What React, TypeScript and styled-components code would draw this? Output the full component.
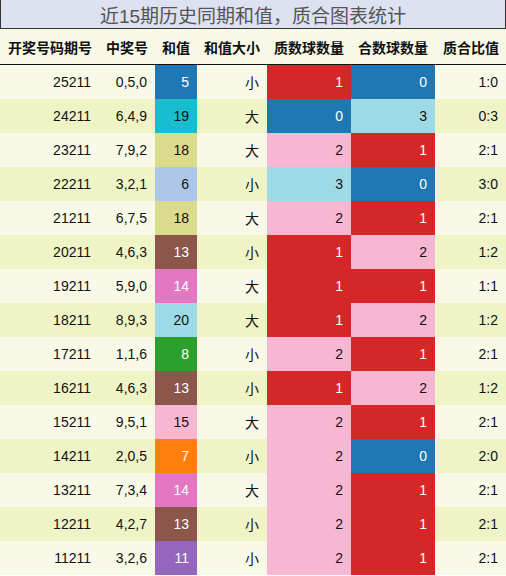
import React from "react";
import styled, { createGlobalStyle } from "styled-components";

const Global = createGlobalStyle`
  html, body { margin: 0; padding: 0; background: #ffffff; }
  body { font-family: "Liberation Sans", "Noto Sans CJK SC", sans-serif; }
`;

const Wrap = styled.div`
  width: 506px;
  display: flex;
  flex-direction: column;
`;

const Title = styled.div`
  height: 28px;
  box-sizing: content-box;
  border: 1px solid #333;
  border-top: none;
  background: #dde1f0;
  color: #555;
  font-family: "Liberation Sans", "Noto Sans CJK SC", sans-serif;
  font-size: 19px;
  display: flex;
  align-items: center;
  justify-content: center;
`;

const Grid = styled.div`
  display: grid;
  grid-template-columns: 99px 56px 42px 70px 84px 84px 71px;
`;

const HeadCell = styled.div`
  height: 35px;
  background: #f8fae7;
  border-bottom: 1px solid #111;
  display: flex;
  align-items: center;
  justify-content: flex-end;
  padding-right: 7px;
  font-family: "Noto Sans CJK SC", sans-serif;
  font-weight: 700;
  font-size: 14px;
  color: #111;
  white-space: nowrap;
`;

const Cell = styled.div<{ $bg: string; $fg: string }>`
  height: 34px;
  background: ${(p) => p.$bg};
  color: ${(p) => p.$fg};
  display: flex;
  align-items: center;
  justify-content: flex-end;
  padding-right: 8px;
  font-family: "Liberation Sans", "Noto Sans CJK SC", sans-serif;
  font-size: 14px;
`;

const palette: Record<number, [string, string]> = {
  5: ["#1f77b4", "#fff"],
  19: ["#17becf", "#111"],
  18: ["#dbdb8d", "#111"],
  6: ["#aec7e8", "#111"],
  13: ["#8c564b", "#fff"],
  14: ["#e377c2", "#fff"],
  20: ["#9edae5", "#111"],
  8: ["#2ca02c", "#fff"],
  15: ["#f7b6d2", "#111"],
  7: ["#ff7f0e", "#fff"],
  11: ["#9467bd", "#fff"],
};

const countColor: Record<number, [string, string]> = {
  0: ["#1f77b4", "#fff"],
  1: ["#d62728", "#fff"],
  2: ["#f7b6d2", "#111"],
  3: ["#9edae5", "#111"],
};

type Row = [string, string, number, string, number, number];

const rows: Row[] = [
  ["25211", "0,5,0", 5, "小", 1, 0],
  ["24211", "6,4,9", 19, "大", 0, 3],
  ["23211", "7,9,2", 18, "大", 2, 1],
  ["22211", "3,2,1", 6, "小", 3, 0],
  ["21211", "6,7,5", 18, "大", 2, 1],
  ["20211", "4,6,3", 13, "小", 1, 2],
  ["19211", "5,9,0", 14, "大", 1, 1],
  ["18211", "8,9,3", 20, "大", 1, 2],
  ["17211", "1,1,6", 8, "小", 2, 1],
  ["16211", "4,6,3", 13, "小", 1, 2],
  ["15211", "9,5,1", 15, "大", 2, 1],
  ["14211", "2,0,5", 7, "小", 2, 0],
  ["13211", "7,3,4", 14, "大", 2, 1],
  ["12211", "4,2,7", 13, "小", 2, 1],
  ["11211", "3,2,6", 11, "小", 2, 1],
];

const headers = ["开奖号码期号", "中奖号", "和值", "和值大小", "质数球数量", "合数球数量", "质合比值"];

export default function App() {
  return (
    <Wrap>
      <Global />
      <Title>近15期历史同期和值，质合图表统计</Title>
      <Grid>
        {headers.map((h) => (
          <HeadCell key={h}>{h}</HeadCell>
        ))}
        {rows.map((r, i) => {
          const bg = i % 2 === 0 ? "#f8fae7" : "#eff4c6";
          const fg = "#111";
          const [sbg, sfg] = palette[r[2]];
          const [zbg, zfg] = countColor[r[4]];
          const [hbg, hfg] = countColor[r[5]];
          return (
            <React.Fragment key={r[0]}>
              <Cell $bg={bg} $fg={fg}>{r[0]}</Cell>
              <Cell $bg={bg} $fg={fg}>{r[1]}</Cell>
              <Cell $bg={sbg} $fg={sfg}>{r[2]}</Cell>
              <Cell $bg={bg} $fg={fg}>{r[3]}</Cell>
              <Cell $bg={zbg} $fg={zfg}>{r[4]}</Cell>
              <Cell $bg={hbg} $fg={hfg}>{r[5]}</Cell>
              <Cell $bg={bg} $fg={fg}>{`${r[4]}:${r[5]}`}</Cell>
            </React.Fragment>
          );
        })}
      </Grid>
    </Wrap>
  );
}
